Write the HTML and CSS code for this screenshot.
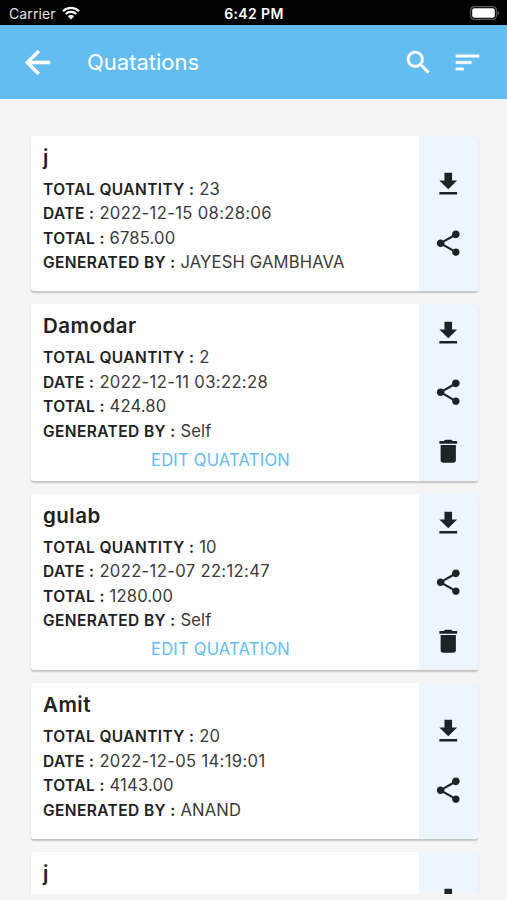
FILE: index.html
```html
<!DOCTYPE html>
<html lang="en">
<head>
<meta charset="utf-8">
<title>Quatations</title>
<link rel="stylesheet" href="styles.css">
</head>
<body>
<svg class="defs" width="0" height="0">
  <symbol id="download" viewBox="0 0 24 24"><path d="M19 9h-4V3H9v6H5l7 7 7-7zM5 18v2h14v-2H5z"/></symbol>
  <symbol id="share" viewBox="0 0 24 24"><path d="M18 16.08c-.76 0-1.44.3-1.96.77L8.91 12.7c.05-.23.09-.46.09-.7s-.04-.47-.09-.7l7.05-4.11c.54.5 1.25.81 2.04.81 1.66 0 3-1.34 3-3s-1.34-3-3-3-3 1.34-3 3c0 .24.04.47.09.7L8.04 9.81C7.5 9.31 6.79 9 6 9c-1.66 0-3 1.34-3 3s1.34 3 3 3c.79 0 1.5-.31 2.04-.81l7.12 4.16c-.05.21-.08.43-.08.65 0 1.61 1.31 2.92 2.92 2.92s2.92-1.31 2.92-2.92-1.31-2.92-2.92-2.92z"/></symbol>
  <symbol id="trash" viewBox="0 0 24 24"><path d="M6 19c0 1.100.9 2 2 2h8c1.100 0 2-.9 2-2V7H6v12zM19 4h-3.500l-1-1h-5l-1 1H5v2h14V4z"/></symbol>
</svg>
<div class="status">
  <div class="carrier"><span>Carrier</span>
    <svg class="wifi" viewBox="0 0 18 14"><path d="M1 5.200a11.500 11.500 0 0 1 16 0M3.700 8a7.600 7.600 0 0 1 10.600 0" fill="none" stroke="#fff" stroke-width="2.200"/><path d="M5.800 10.200a4.600 4.600 0 0 1 6.400 0L9 13.500z" fill="#fff"/></svg>
  </div>
  <span class="time">6:42 PM</span>
  <svg class="battery" viewBox="0 0 30 14"><rect x=".6" y=".6" width="25.800" height="12.800" rx="3.600" fill="none" stroke="#5c5c5c" stroke-width="1.200"/><rect x="2.200" y="2.200" width="22.600" height="9.600" rx="2" fill="#fff"/><path d="M27.700 4.700c2.300.8 2.300 3.800 0 4.600z" fill="#5c5c5c"/></svg>
</div>
<header class="bar">
  <svg class="back" viewBox="0 0 24 24"><path d="M20 11H7.830l5.590-5.590L12 4l-8 8 8 8 1.410-1.410L7.830 13H20v-2z"/></svg>
  <h1>Quatations</h1>
  <svg class="tool" viewBox="0 0 24 24"><path d="M15.500 14h-.79l-.28-.27C15.410 12.590 16 11.110 16 9.500 16 5.910 13.090 3 9.500 3S3 5.910 3 9.500 5.910 16 9.500 16c1.610 0 3.090-.59 4.230-1.570l.27.28v.79l5 4.990L20.490 19l-4.990-5zm-6 0C7.010 14 5 11.990 5 9.500S7.010 5 9.500 5 14 7.010 14 9.500 11.990 14 9.500 14z"/></svg>
  <svg class="tool" viewBox="0 0 24 24"><path d="M3 18h6v-2H3v2zM3 6v2h18V6H3zm0 7h12v-2H3v2z"/></svg>
</header>
<main class="list">
  <article class="card">
    <div class="info">
      <h2>j</h2>
      <p><b>TOTAL QUANTITY :</b> 23</p>
      <p class="date"><b>DATE :</b> 2022-12-15 08:28:06</p>
      <p><b>TOTAL :</b> 6785.00</p>
      <p><b>GENERATED BY :</b> JAYESH GAMBHAVA</p>
    </div>
    <div class="actions"><svg><use href="#download"/></svg><svg><use href="#share"/></svg></div>
  </article>
  <article class="card tall">
    <div class="info">
      <h2>Damodar</h2>
      <p><b>TOTAL QUANTITY :</b> 2</p>
      <p class="date"><b>DATE :</b> 2022-12-11 03:22:28</p>
      <p><b>TOTAL :</b> 424.80</p>
      <p><b>GENERATED BY :</b> Self</p>
      <a class="edit">EDIT QUATATION</a>
    </div>
    <div class="actions"><svg><use href="#download"/></svg><svg><use href="#share"/></svg><svg><use href="#trash"/></svg></div>
  </article>
  <article class="card tall">
    <div class="info">
      <h2>gulab</h2>
      <p><b>TOTAL QUANTITY :</b> 10</p>
      <p class="date"><b>DATE :</b> 2022-12-07 22:12:47</p>
      <p><b>TOTAL :</b> 1280.00</p>
      <p><b>GENERATED BY :</b> Self</p>
      <a class="edit">EDIT QUATATION</a>
    </div>
    <div class="actions"><svg><use href="#download"/></svg><svg><use href="#share"/></svg><svg><use href="#trash"/></svg></div>
  </article>
  <article class="card">
    <div class="info">
      <h2>Amit</h2>
      <p><b>TOTAL QUANTITY :</b> 20</p>
      <p class="date"><b>DATE :</b> 2022-12-05 14:19:01</p>
      <p><b>TOTAL :</b> 4143.00</p>
      <p><b>GENERATED BY :</b> ANAND</p>
    </div>
    <div class="actions"><svg><use href="#download"/></svg><svg><use href="#share"/></svg></div>
  </article>
  <article class="card">
    <div class="info">
      <h2>j</h2>
    </div>
    <div class="actions"><svg><use href="#download"/></svg><svg><use href="#share"/></svg></div>
  </article>
</main>
</body>
</html>
```
FILE: styles.css
```css
* { box-sizing: border-box; }
body {
  margin: 0;
  height: 900px;
  overflow: hidden;
  display: flex;
  flex-direction: column;
  background: #f5f5f5;
  color: #212121;
  font-family: Inter, "Liberation Sans", sans-serif;
}
.defs { position: absolute; }
h1, h2, p { margin: 0; }

.status {
  flex: none;
  height: 25px;
  padding: 2px 7px 0 9px;
  display: grid;
  grid-template-columns: 1fr auto 1fr;
  align-items: center;
  background: #000;
  color: #fff;
  font-size: 14px;
}
.carrier { display: flex; align-items: center; gap: 6px; color: #e4e4e4; letter-spacing: .1px; }
.wifi { width: 18px; height: 14px; margin-top: -2px; }
.time { font-weight: 600; letter-spacing: .4px; margin-left: -1px; }
.battery { width: 30px; height: 14px; justify-self: end; margin-top: -1px; }

.bar {
  flex: none;
  height: 73.500px;
  padding: 1px 24px 0 19px;
  display: flex;
  align-items: center;
  background: #64bdf1;
  color: #fff;
}
.bar svg { fill: #fff; stroke: #fff; stroke-width: .4; flex: none; }
.back { width: 37px; height: 37px; }
.bar h1 {
  flex: 1;
  margin-left: 31px;
  font-size: 22px;
  font-weight: 400;
  letter-spacing: 0;
}
.bar .tool { width: 31px; height: 31px; stroke-width: .3; }
.tool + .tool { margin-left: 18px; }

.list {
  height: 795.500px;
  overflow: hidden;
  padding: 37px 29.500px 0 31px;
  display: flex;
  flex-direction: column;
  gap: 13px;
}
.card {
  flex: none;
  height: 155.500px;
  display: flex;
  overflow: hidden;
  border-radius: 3px;
  background: #fff;
  box-shadow: 0 1.500px 1.500px rgba(0, 0, 0, .2);
}
.card.tall { height: 176.500px; }
.info { flex: 1; padding: 8px 12px 0; display: flex; flex-direction: column; }
.info h2 {
  height: 33px;
  line-height: 28px;
  font-size: 20.500px;
  font-weight: 600;
  letter-spacing: .5px;
}
.info p {
  height: 24.500px;
  line-height: 24.500px;
  font-size: 16.600px;
  letter-spacing: .15px;
  color: #3a3a3a;
  white-space: nowrap;
}
.info .date { letter-spacing: .35px; }
.info b { font-size: 15.500px; font-weight: 600; letter-spacing: .4px; color: #212121; }
.edit {
  align-self: center;
  margin-left: -9px;
  margin-top: 2.500px;
  line-height: 28px;
  font-size: 16.600px;
  letter-spacing: .2px;
  color: #64bdf1;
}
.actions {
  width: 58.500px;
  display: flex;
  flex-direction: column;
  align-items: center;
  justify-content: center;
  gap: 28.500px;
  background: #edf6fe;
}
.actions svg { width: 30.500px; height: 30.500px; fill: #1d2326; }
```
